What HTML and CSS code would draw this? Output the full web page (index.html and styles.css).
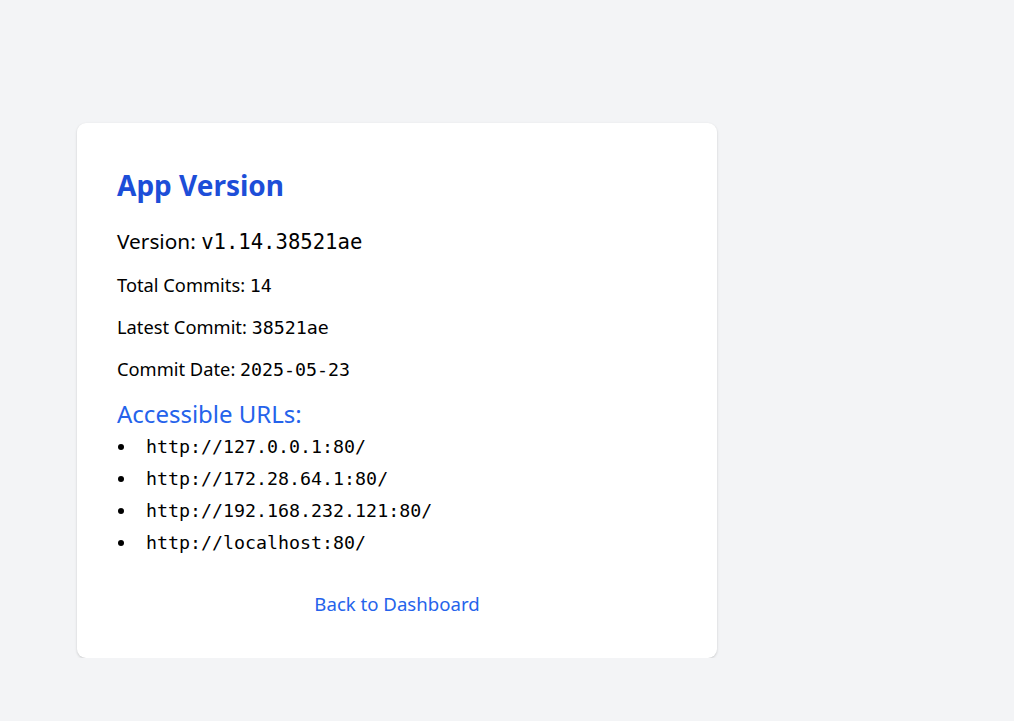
FILE: index.html
```html
<!DOCTYPE html>
<html>
<head>
<meta charset="utf-8">
<link rel="stylesheet" href="styles.css">
</head>
<body>
<div class="card">
  <h1 class="title">App Version</h1>
  <p class="version">Version: <code class="mono mono-lg">v1.14.38521ae</code></p>
  <p class="row">Total Commits: <code class="mono">14</code></p>
  <p class="row">Latest Commit: <code class="mono">38521ae</code></p>
  <p class="row">Commit Date: <code class="mono">2025-05-23</code></p>
  <h2 class="subtitle">Accessible URLs:</h2>
  <ul class="urls">
    <li class="url-item"><span class="bullet"></span><code class="mono">http://127.0.0.1:80/</code></li>
    <li class="url-item"><span class="bullet"></span><code class="mono">http://172.28.64.1:80/</code></li>
    <li class="url-item"><span class="bullet"></span><code class="mono">http://192.168.232.121:80/</code></li>
    <li class="url-item"><span class="bullet"></span><code class="mono">http://localhost:80/</code></li>
  </ul>
  <div class="back"><a href="#" class="back-link">Back to Dashboard</a></div>
</div>
</body>
</html>
```
FILE: styles.css
```css
html, body {
  margin: 0;
  padding: 0;
  background: #f3f4f6;
  font-family: "Noto Sans", "Open Sans", sans-serif;
  color: #000;
}
body {
  padding: 123px 0 0 77px;
}
.card {
  width: 640px;
  box-sizing: border-box;
  background: #fff;
  border-radius: 9px;
  box-shadow: 0 1px 3px rgba(0,0,0,0.12), 0 1px 2px rgba(0,0,0,0.06);
  padding: 40px 40px 40px;
}
.title {
  margin: 0 0 19px;
  font-size: 28px;
  line-height: 44px;
  font-weight: 700;
  color: #1d4ed8;
}
.version {
  margin: 0 0 15px;
  height: 30px;
  font-size: 20.8px;
  line-height: 30px;
}
.row {
  margin: 0 0 14px;
  height: 28px;
  font-size: 18.3px;
  line-height: 28px;
}
.mono {
  font-family: "DejaVu Sans Mono", "Liberation Mono", monospace;
  font-size: 18.3px;
  line-height: 1;
}
.mono-lg {
  font-size: 20.6px;
}
.subtitle {
  margin: 1px 0 0;
  font-size: 24px;
  line-height: 34px;
  font-weight: 400;
  color: #2563eb;
}
.urls {
  margin: 0;
  padding: 0;
  list-style: none;
}
.url-item {
  display: flex;
  align-items: center;
  line-height: 32px;
  height: 32px;
}
.bullet {
  width: 6px;
  height: 6px;
  border-radius: 50%;
  background: #000;
  margin: 0 22px 0 1px;
  flex: none;
}
.back {
  text-align: center;
  margin-top: 31px;
}
.back-link {
  color: #2563eb;
  text-decoration: none;
  font-size: 18.6px;
  line-height: 28px;
}
```
